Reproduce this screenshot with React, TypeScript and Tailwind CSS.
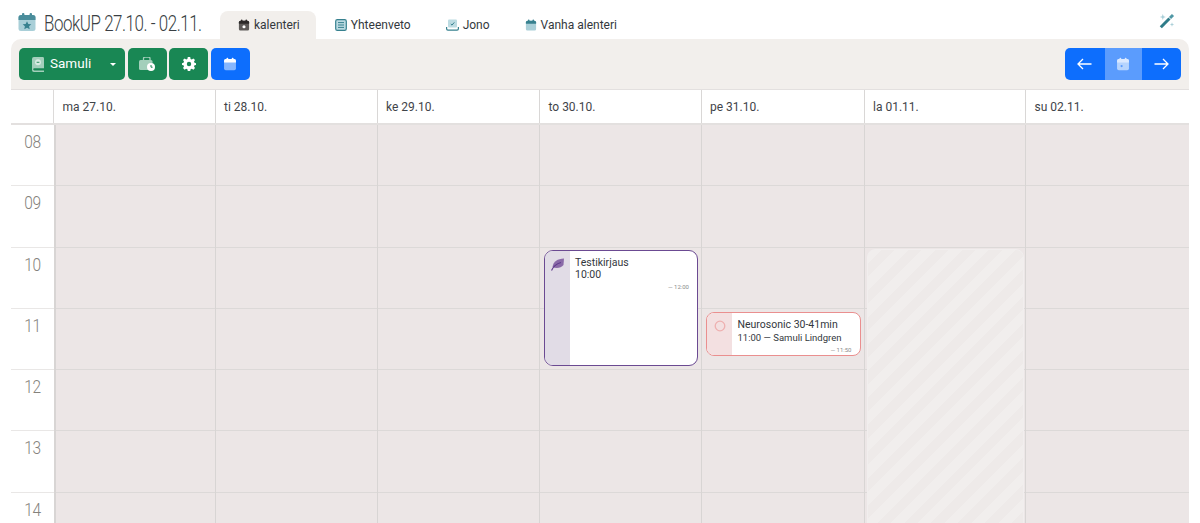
const days = ["ma 27.10.", "ti 28.10.", "ke 29.10.", "to 30.10.", "pe 31.10.", "la 01.11.", "su 02.11."]
const hours = ["08", "09", "10", "11", "12", "13", "14"]

function CalIcon({ size, light, dark, children }: any) {
    return (
        <svg width={size} height={size} viewBox="0 0 20 20" className="shrink-0">
            <rect x="1.5" y="3" width="17" height="16" rx="2.5" fill={light} />
            <path d="M1.5 8V5.5A2.5 2.5 0 0 1 4 3h12a2.5 2.5 0 0 1 2.500 2.500V8z" fill={dark} />
            <rect x="5" y="1" width="2.4" height="4.5" rx="1" fill={dark} />
            <rect x="12.6" y="1" width="2.4" height="4.5" rx="1" fill={dark} />
            {children}
        </svg>
    )
}

function Tab({ icon, label, active }: any) {
    return (
        <div className={`flex items-center gap-[4px] h-[28px] pr-[16px] pb-[1px] rounded-t-[8px] text-[12px] text-[#33383d] ${active ? "bg-[#f2efec] pl-[18px]" : "pl-[19px]"}`}>
            {icon}
            <span>{label}</span>
        </div>
    )
}

function App() {
    return (
        <div className="w-[1200px] h-[523px] overflow-hidden bg-white font-['Roboto',sans-serif]">
            <header className="flex items-end h-[39px] pl-[17px] pr-[25px]">
                <div className="flex items-center h-[39px] w-[203px] pt-[7px] gap-[7px]">
                    <div className="-mt-[3px]">
                        <CalIcon size={20} light="#a9cfd8" dark="#4a8d9b">
                            <path d="M10 9.2l1.3 2.7 3 .4-2.2 2 .6 2.9L10 15.8l-2.7 1.400.6-2.900-2.200-2 3-.4z" fill="#37818f" />
                        </CalIcon>
                    </div>
                    <span className="text-[22px] font-light tracking-[-0.6px] text-[#3a3f44] whitespace-nowrap origin-left scale-x-[0.77]">BookUP 27.10. - 02.11.</span>
                </div>
                <Tab active label="kalenteri" icon={
                    <CalIcon size={12} light="#5d5a58" dark="#2c2a29">
                        <circle cx="10" cy="13" r="2.6" fill="#fff" />
                    </CalIcon>
                } />
                <Tab label="Yhteenveto" icon={
                    <svg width="12" height="12" viewBox="0 0 12 12" className="shrink-0">
                        <rect x="0.7" y="0.7" width="10.6" height="10.6" rx="1.6" fill="#bcdbe2" stroke="#37818f" strokeWidth="1.2" />
                        <path d="M3 3.6h6M3 6h6M3 8.4h6" stroke="#37818f" strokeWidth="1" />
                    </svg>
                } />
                <Tab label="Jono" icon={
                    <svg width="13" height="12" viewBox="0 0 13 12" className="shrink-0">
                        <rect x="2" y="0.5" width="9" height="8" rx="1" fill="#bcdbe2" />
                        <path d="M4.8 5l1.2 1.1L8.3 3.4" stroke="#37818f" strokeWidth="1" fill="none" />
                        <path d="M0.6 8v1.8c0 .8.5 1.400 1.300 1.400h9.200c.8 0 1.300-.6 1.300-1.400V8" stroke="#37818f" strokeWidth="1.2" fill="none" />
                    </svg>
                } />
                <Tab label="Vanha alenteri" icon={<CalIcon size={12} light="#a9cfd8" dark="#37818f" />} />
                <div className="ml-auto mb-[10px]">
                    <svg width="16" height="16" viewBox="0 0 16 16">
                        <path d="M1.800 14.200L10.500 5.500" stroke="#2f7c89" strokeWidth="3" />
                        <path d="M11 5l3-3" stroke="#4f97a5" strokeWidth="3" />
                        <path d="M3.800 1l.8 2.200 2.200.8-2.200.8-.8 2.200L3 4.800.8 4 3 3.200zM13 9.200l.6 1.700 1.700.6-1.700.6-.6 1.700-.6-1.700-1.700-.6 1.700-.6z" fill="#a9cfd8" />
                    </svg>
                </div>
            </header>

            <main className="mx-[11px] w-[1178px] rounded-t-[10px] bg-[#f2efec]">
                <div className="flex items-center justify-between h-[50px] pl-[8px] pr-[8.5px]">
                    <div className="flex gap-[2.6px]">
                        <div className="flex items-center w-[106px] h-[32px] rounded-[5px] bg-[#198754] text-white pl-[13px] pr-[8px]">
                            <svg width="12" height="15" viewBox="0 0 13 16" className="shrink-0">
                                <path d="M2 0h9.500A1.500 1.500 0 0 1 13 1.500V12H2.500a1.200 1.200 0 0 0 0 2.400H13V16H2a2 2 0 0 1-2-2V2a2 2 0 0 1 2-2z" fill="#a3cfbb" />
                                <circle cx="6.500" cy="5.600" r="3.200" fill="#d9ece3" />
                                <path d="M5 5.600h3" stroke="#198754" strokeWidth="1" />
                            </svg>
                            <span className="ml-[6px] text-[13.5px] leading-none">Samuli</span>
                            <span className="ml-auto mr-[1px] w-0 h-0 border-x-[3.500px] border-x-transparent border-t-[3.500px] border-t-white" />
                        </div>
                        <div className="flex items-center justify-center w-[39px] h-[32px] rounded-[5px] bg-[#198754]">
                            <svg width="16" height="14" viewBox="0 0 16 14">
                                <path d="M4.500 3V1.600C4.500.7 5.200 0 6.100 0h3.300c.9 0 1.600.7 1.600 1.600V3" fill="none" stroke="#a3cfbb" strokeWidth="1.300" />
                                <rect x="0" y="3" width="13.500" height="10" rx="1.500" fill="#a3cfbb" />
                                <circle cx="12" cy="10" r="4" fill="#fff" />
                                <path d="M12 8v2.200h1.600" stroke="#198754" strokeWidth="1" fill="none" />
                            </svg>
                        </div>
                        <div className="flex items-center justify-center w-[39px] h-[32px] rounded-[5px] bg-[#198754]">
                            <svg width="14" height="14" viewBox="0 0 14 14">
                                <path d="M7 0l1.200.1.4 1.800 1.200.5L11.400 1.400l1.600 1.700-1 1.500.5 1.200 1.800.4v1.700l-1.800.4-.5 1.200 1 1.500-1.600 1.700-1.600-1-1.200.5-.4 1.800H5.800l-.4-1.800-1.200-.5-1.600 1-1.600-1.700 1-1.500-.5-1.200L-.3 7.900V6.200l1.800-.4.5-1.200-1-1.500 1.600-1.700 1.600 1 1.200-.5.4-1.800z" fill="#fff" />
                                <circle cx="7" cy="7" r="2.200" fill="#198754" />
                            </svg>
                        </div>
                        <div className="flex items-center justify-center w-[39px] h-[32px] rounded-[5px] bg-[#0d6efd]">
                            <CalIcon size={14} light="#86b7fe" dark="#fff">
                                <rect x="4" y="10" width="12" height="6" rx="1" fill="#86b7fe" />
                            </CalIcon>
                        </div>
                    </div>
                    <div className="flex h-[32px] w-[116px] rounded-[5px] overflow-hidden bg-[#0d6efd]">
                        <div className="flex items-center justify-center w-[40px]">
                            <svg width="15" height="12" viewBox="0 0 15 12" fill="none" stroke="#fff" strokeWidth="1.300"><path d="M14.500 6H1M6 1L1 6l5 5" /></svg>
                        </div>
                        <div className="flex items-center justify-center w-[37px] bg-[#5b9cfd]">
                            <CalIcon size={14} light="#b6d4fe" dark="#dbe9ff">
                                <circle cx="8" cy="13" r="1.600" fill="#5b9cfd" />
                            </CalIcon>
                        </div>
                        <div className="flex items-center justify-center w-[39px]">
                            <svg width="15" height="12" viewBox="0 0 15 12" fill="none" stroke="#fff" strokeWidth="1.300"><path d="M.5 6H14M9 1l5 5-5 5" /></svg>
                        </div>
                    </div>
                </div>

                <div className="grid grid-cols-[43px_161.5px_162px_162.5px_161.5px_163px_161.5px_162.5px] h-[36px] bg-white border-t-[1px] border-b-[2px] border-[#e3e0df] text-[12px] text-[#3f4449]">
                    <div className="border-r-[1.5px] border-[#dcdad9]" />
                    {days.map((d) => (
                        <div key={d} className="flex items-center pl-[8.5px] border-r-[1px] border-[#d9d7d6] last:border-r-0">{d}</div>
                    ))}
                </div>

                <div className="grid grid-cols-[43px_161.5px_162px_162.5px_161.5px_163px_161.5px_162.5px] bg-white">
                    <div>
                        {hours.map((h) => (
                            <div key={h} className="h-[61.3px] border-b-[1.5px] border-[#e9e7e6] pt-[3px] text-center text-[18px] font-light text-[#85827c]">
                                <span className="inline-block scale-x-[0.86] tracking-[-0.4px]">{h}</span>
                            </div>
                        ))}
                    </div>
                    {days.map((d, i) => (
                        <div key={d} className={`relative bg-[#ece6e6] border-r-[1px] border-[#d8d5d4] last:border-r-0 ${i === 0 ? "border-l-[2px]" : ""}`}>
                            {hours.map((h) => (
                                <div key={h} className="h-[61.3px] border-b-[1.5px] border-[#dcd9d8]" />
                            ))}
                            {i === 3 && (
                                <div className="absolute left-[4px] top-[125px] flex w-[154px] h-[116px] rounded-[9px] border-[1px] border-[#6b4a92] bg-white overflow-hidden">
                                    <div className="w-[25px] bg-[#e1dce6] pl-[6px] pt-[7px]">
                                        <svg width="14" height="13" viewBox="0 0 14 13">
                                            <path d="M13 .5C6.500 1 2.500 3 1.500 9c3 1.500 8.500 1.500 11-2z" fill="#8a6aa8" />
                                            <path d="M.5 12.500C2.500 8 6 5.500 10 4.500" stroke="#5f3a8c" strokeWidth="1.200" fill="none" />
                                        </svg>
                                    </div>
                                    <div className="relative flex-1 pl-[5px] pt-[6px] text-[10.5px] leading-[12px] text-[#33383d]">
                                        <div>Testikirjaus</div>
                                        <div>10:00</div>
                                        <div className="absolute right-[8px] top-[30px] text-[6px] text-[#8b8b8b]">— 12:00</div>
                                    </div>
                                </div>
                            )}
                            {i === 4 && (
                                <div className="absolute left-[4px] top-[186.5px] flex w-[155px] h-[44px] rounded-[8px] border-[1.5px] border-[#ea8f8f] bg-white overflow-hidden">
                                    <div className="w-[25px] bg-[#f3e0e1] pl-[7px] pt-[7px]">
                                        <svg width="12" height="12" viewBox="0 0 12 12">
                                            <circle cx="6" cy="6" r="4.800" fill="none" stroke="#eeb0b0" strokeWidth="1.300" />
                                        </svg>
                                    </div>
                                    <div className="relative flex-1 pl-[6px] pt-[5px] text-[10.5px] leading-[13px] text-[#33383d] whitespace-nowrap">
                                        <div>Neurosonic 30-41min</div>
                                        <div className="text-[9.5px]">11:00 — Samuli Lindgren</div>
                                        <div className="absolute right-[8px] top-[30px] text-[6px] text-[#8b8b8b]">— 11:50</div>
                                    </div>
                                </div>
                            )}
                            {i === 5 && (
                                <div className="absolute left-[2px] top-[124px] w-[157px] h-[300px] rounded-[8px] border-[1px] border-[#f1eeee] bg-[repeating-linear-gradient(135deg,#f1eeed_0px,#f1eeed_9.5px,#eeeae9_9.5px,#eeeae9_19px)]" />
                            )}
                        </div>
                    ))}
                </div>
            </main>
        </div>
    )
}

export default App
